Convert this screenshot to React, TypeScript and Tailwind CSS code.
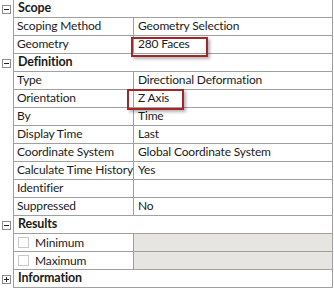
import React from "react";

type Row =
  | { kind: "section"; label: string; open: boolean }
  | { kind: "prop"; label: string; value: string }
  | { kind: "check"; label: string };

const rows: Row[] = [
  { kind: "section", label: "Scope", open: true },
  { kind: "prop", label: "Scoping Method", value: "Geometry Selection" },
  { kind: "prop", label: "Geometry", value: "280 Faces" },
  { kind: "section", label: "Definition", open: true },
  { kind: "prop", label: "Type", value: "Directional Deformation" },
  { kind: "prop", label: "Orientation", value: "Z Axis" },
  { kind: "prop", label: "By", value: "Time" },
  { kind: "prop", label: "Display Time", value: "Last" },
  { kind: "prop", label: "Coordinate System", value: "Global Coordinate System" },
  { kind: "prop", label: "Calculate Time History", value: "Yes" },
  { kind: "prop", label: "Identifier", value: "" },
  { kind: "prop", label: "Suppressed", value: "No" },
  { kind: "section", label: "Results", open: true },
  { kind: "check", label: "Minimum" },
  { kind: "check", label: "Maximum" },
  { kind: "section", label: "Information", open: false },
];

const Toggle = ({ open }: { open: boolean }) => (
  <svg width="9" height="9" viewBox="0 0 9 9" className="block">
    <rect x="0.5" y="0.5" width="8" height="8" fill="#fff" stroke="#8c8c8c" />
    <line x1="2" y1="4.5" x2="7" y2="4.5" stroke="#222" />
    {!open && <line x1="4.5" y1="2" x2="4.5" y2="7" stroke="#222" />}
  </svg>
);

const App = () => {
  return (
    <div
      className="relative w-[334px] h-[290px] bg-white text-[12px] tracking-[-0.15px] text-[#1b1b1b] overflow-hidden"
      style={{ fontFamily: 'Lato, "Open Sans", sans-serif' }}
    >
      {rows.map((row, i) => (
        <div key={i} className="flex h-[18px]">
          <div className="w-[13px] flex items-center justify-center pr-[1px]">
            {row.kind === "section" && <Toggle open={row.open} />}
          </div>
          <div className="w-[320px] flex border-l border-r border-b border-[#a0a0a0]">
            {row.kind === "section" && (
              <div className="pl-[4px] font-bold text-[12.5px] leading-[16px]">{row.label}</div>
            )}
            {row.kind === "prop" && (
              <>
                <div className="w-[119px] shrink-0 pl-[3px] leading-[16px] whitespace-nowrap">
                  {row.label}
                </div>
                <div className="flex-1 border-l border-[#a0a0a0] pl-[4px] leading-[16px] whitespace-nowrap">
                  {row.value}
                </div>
              </>
            )}
            {row.kind === "check" && (
              <>
                <div className="w-[119px] shrink-0 pl-[4px] flex items-center gap-[6px] leading-[16px]">
                  <span className="w-[11px] h-[11px] border border-[#c8c8c8] bg-white" />
                  <span>{row.label}</span>
                </div>
                <div className="flex-1 border-l border-[#a0a0a0] bg-[#e6e5e1]" />
              </>
            )}
          </div>
        </div>
      ))}

      <div className="absolute left-[131px] top-[37px] w-[77px] h-[20px] border-2 border-[#a3262a] shadow-[2px_2px_3px_rgba(0,0,0,0.3)]" />
      <div className="absolute left-[127px] top-[89px] w-[57px] h-[21px] border-2 border-[#a3262a] shadow-[2px_2px_3px_rgba(0,0,0,0.3)]" />
    </div>
  );
};

export default App;
